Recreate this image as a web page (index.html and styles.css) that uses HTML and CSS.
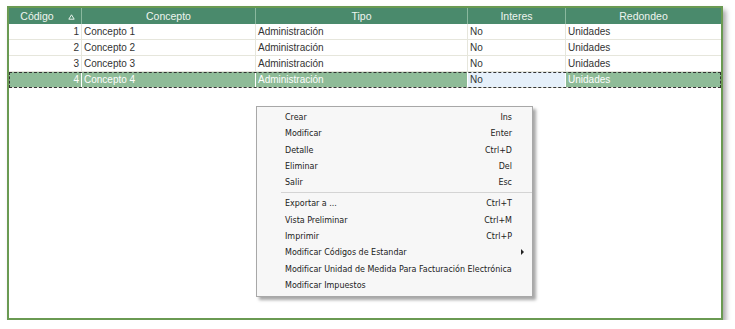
FILE: index.html
```html
<!DOCTYPE html>
<html lang="es">
<head>
    <meta charset="UTF-8">
    <title>Conceptos</title>
    <link rel="stylesheet" href="styles.css">
</head>
<body>
    <div class="frame">
        <div class="grid">
            <div class="hcell sorted">Código
                <svg class="sort" width="7" height="6" viewBox="0 0 7 6"><path d="M3.5 0.8 L6.2 5.2 L0.8 5.2 Z" fill="none" stroke="#e8f2ec" stroke-width="1"/></svg>
            </div>
            <div class="hcell">Concepto</div>
            <div class="hcell">Tipo</div>
            <div class="hcell">Interes</div>
            <div class="hcell last">Redondeo</div>
        </div>
        <div class="grid row">
            <div class="cell num">1</div>
            <div class="cell">Concepto 1</div>
            <div class="cell">Administración</div>
            <div class="cell">No</div>
            <div class="cell last">Unidades</div>
        </div>
        <div class="grid row">
            <div class="cell num">2</div>
            <div class="cell">Concepto 2</div>
            <div class="cell">Administración</div>
            <div class="cell">No</div>
            <div class="cell last">Unidades</div>
        </div>
        <div class="grid row">
            <div class="cell num">3</div>
            <div class="cell">Concepto 3</div>
            <div class="cell">Administración</div>
            <div class="cell">No</div>
            <div class="cell last">Unidades</div>
        </div>
        <div class="grid row selected">
            <div class="cell num">4</div>
            <div class="cell">Concepto 4</div>
            <div class="cell">Administración</div>
            <div class="cell focus">No</div>
            <div class="cell last">Unidades</div>
        </div>

        <div class="menu">
            <div class="item"><span>Crear</span><span>Ins</span></div>
            <div class="item"><span>Modificar</span><span>Enter</span></div>
            <div class="item"><span>Detalle</span><span>Ctrl+D</span></div>
            <div class="item"><span>Eliminar</span><span>Del</span></div>
            <div class="item"><span>Salir</span><span>Esc</span></div>
            <div class="sep"></div>
            <div class="item"><span>Exportar a ...</span><span>Ctrl+T</span></div>
            <div class="item"><span>Vista Preliminar</span><span>Ctrl+M</span></div>
            <div class="item"><span>Imprimir</span><span>Ctrl+P</span></div>
            <div class="item sub"><span>Modificar Códigos de Estandar</span><span></span></div>
            <div class="item"><span>Modificar Unidad de Medida Para Facturación Electrónica</span><span></span></div>
            <div class="item"><span>Modificar Impuestos</span><span></span></div>
        </div>
    </div>
</body>
</html>
```

FILE: styles.css
```css
body {
    margin: 0;
    background: #fff;
    font-family: "Liberation Sans", Arial, sans-serif;
    font-size: 10px;
    color: #333;
}
.frame {
    position: relative;
    margin: 6px 0 0 7px;
    width: 712px;
    height: 310px;
    border: 2px solid #6a9a52;
    box-shadow: 3px 4px 5px rgba(0,0,0,0.35);
    background: #fff;
}
.grid {
    display: grid;
    grid-template-columns: 73px 174px 212px 98px 155px;
    height: 16px;
}
.hcell {
    position: relative;
    background: #4a8a6c;
    color: #eef5f0;
    text-align: center;
    line-height: 16px;
    font-size: 10.5px;
    border-right: 1px solid #8ab89e;
}
.hcell.sorted {
    padding-right: 16px;
}
.hcell.last {
    border-right: none;
}
.sort {
    position: absolute;
    right: 6px;
    top: 6px;
}
.row {
    border-bottom: 1px solid #e6e6dc;
    height: 15px;
}
.cell {
    line-height: 15px;
    padding-left: 2px;
    border-right: 1px solid #e6e6dc;
    white-space: nowrap;
    overflow: hidden;
}
.cell.last {
    border-right: none;
}
.num {
    text-align: right;
    padding: 0 2px 0 0;
}
.selected {
    background: #8fbc98;
    color: #fff;
    outline: 1px dashed #333;
    outline-offset: -1px;
}
.selected .cell {
    border-right-color: #fff;
}
.selected .focus {
    background: #e6f0fa;
    color: #333;
}
.menu {
    position: absolute;
    left: 247px;
    top: 98px;
    width: 275px;
    padding: 2px 0 3px;
    background: #f7f7f7;
    border: 1px solid #a8a8a8;
    box-shadow: 3px 3px 3px rgba(0,0,0,0.35);
    font-family: "DejaVu Sans Condensed", "DejaVu Sans", sans-serif;
    font-size: 8.9px;
    color: #222;
}
.item {
    display: flex;
    justify-content: space-between;
    height: 16.3px;
    line-height: 16px;
    padding: 0 20px 0 28px;
    white-space: nowrap;
}
.sub {
    position: relative;
}
.sub::after {
    content: "";
    position: absolute;
    right: 8px;
    top: 5px;
    border-left: 3px solid #222;
    border-top: 3px solid transparent;
    border-bottom: 3px solid transparent;
}
.sep {
    height: 1px;
    background: #d4d4d4;
    margin: 2px 0 2px 24px;
}
```
